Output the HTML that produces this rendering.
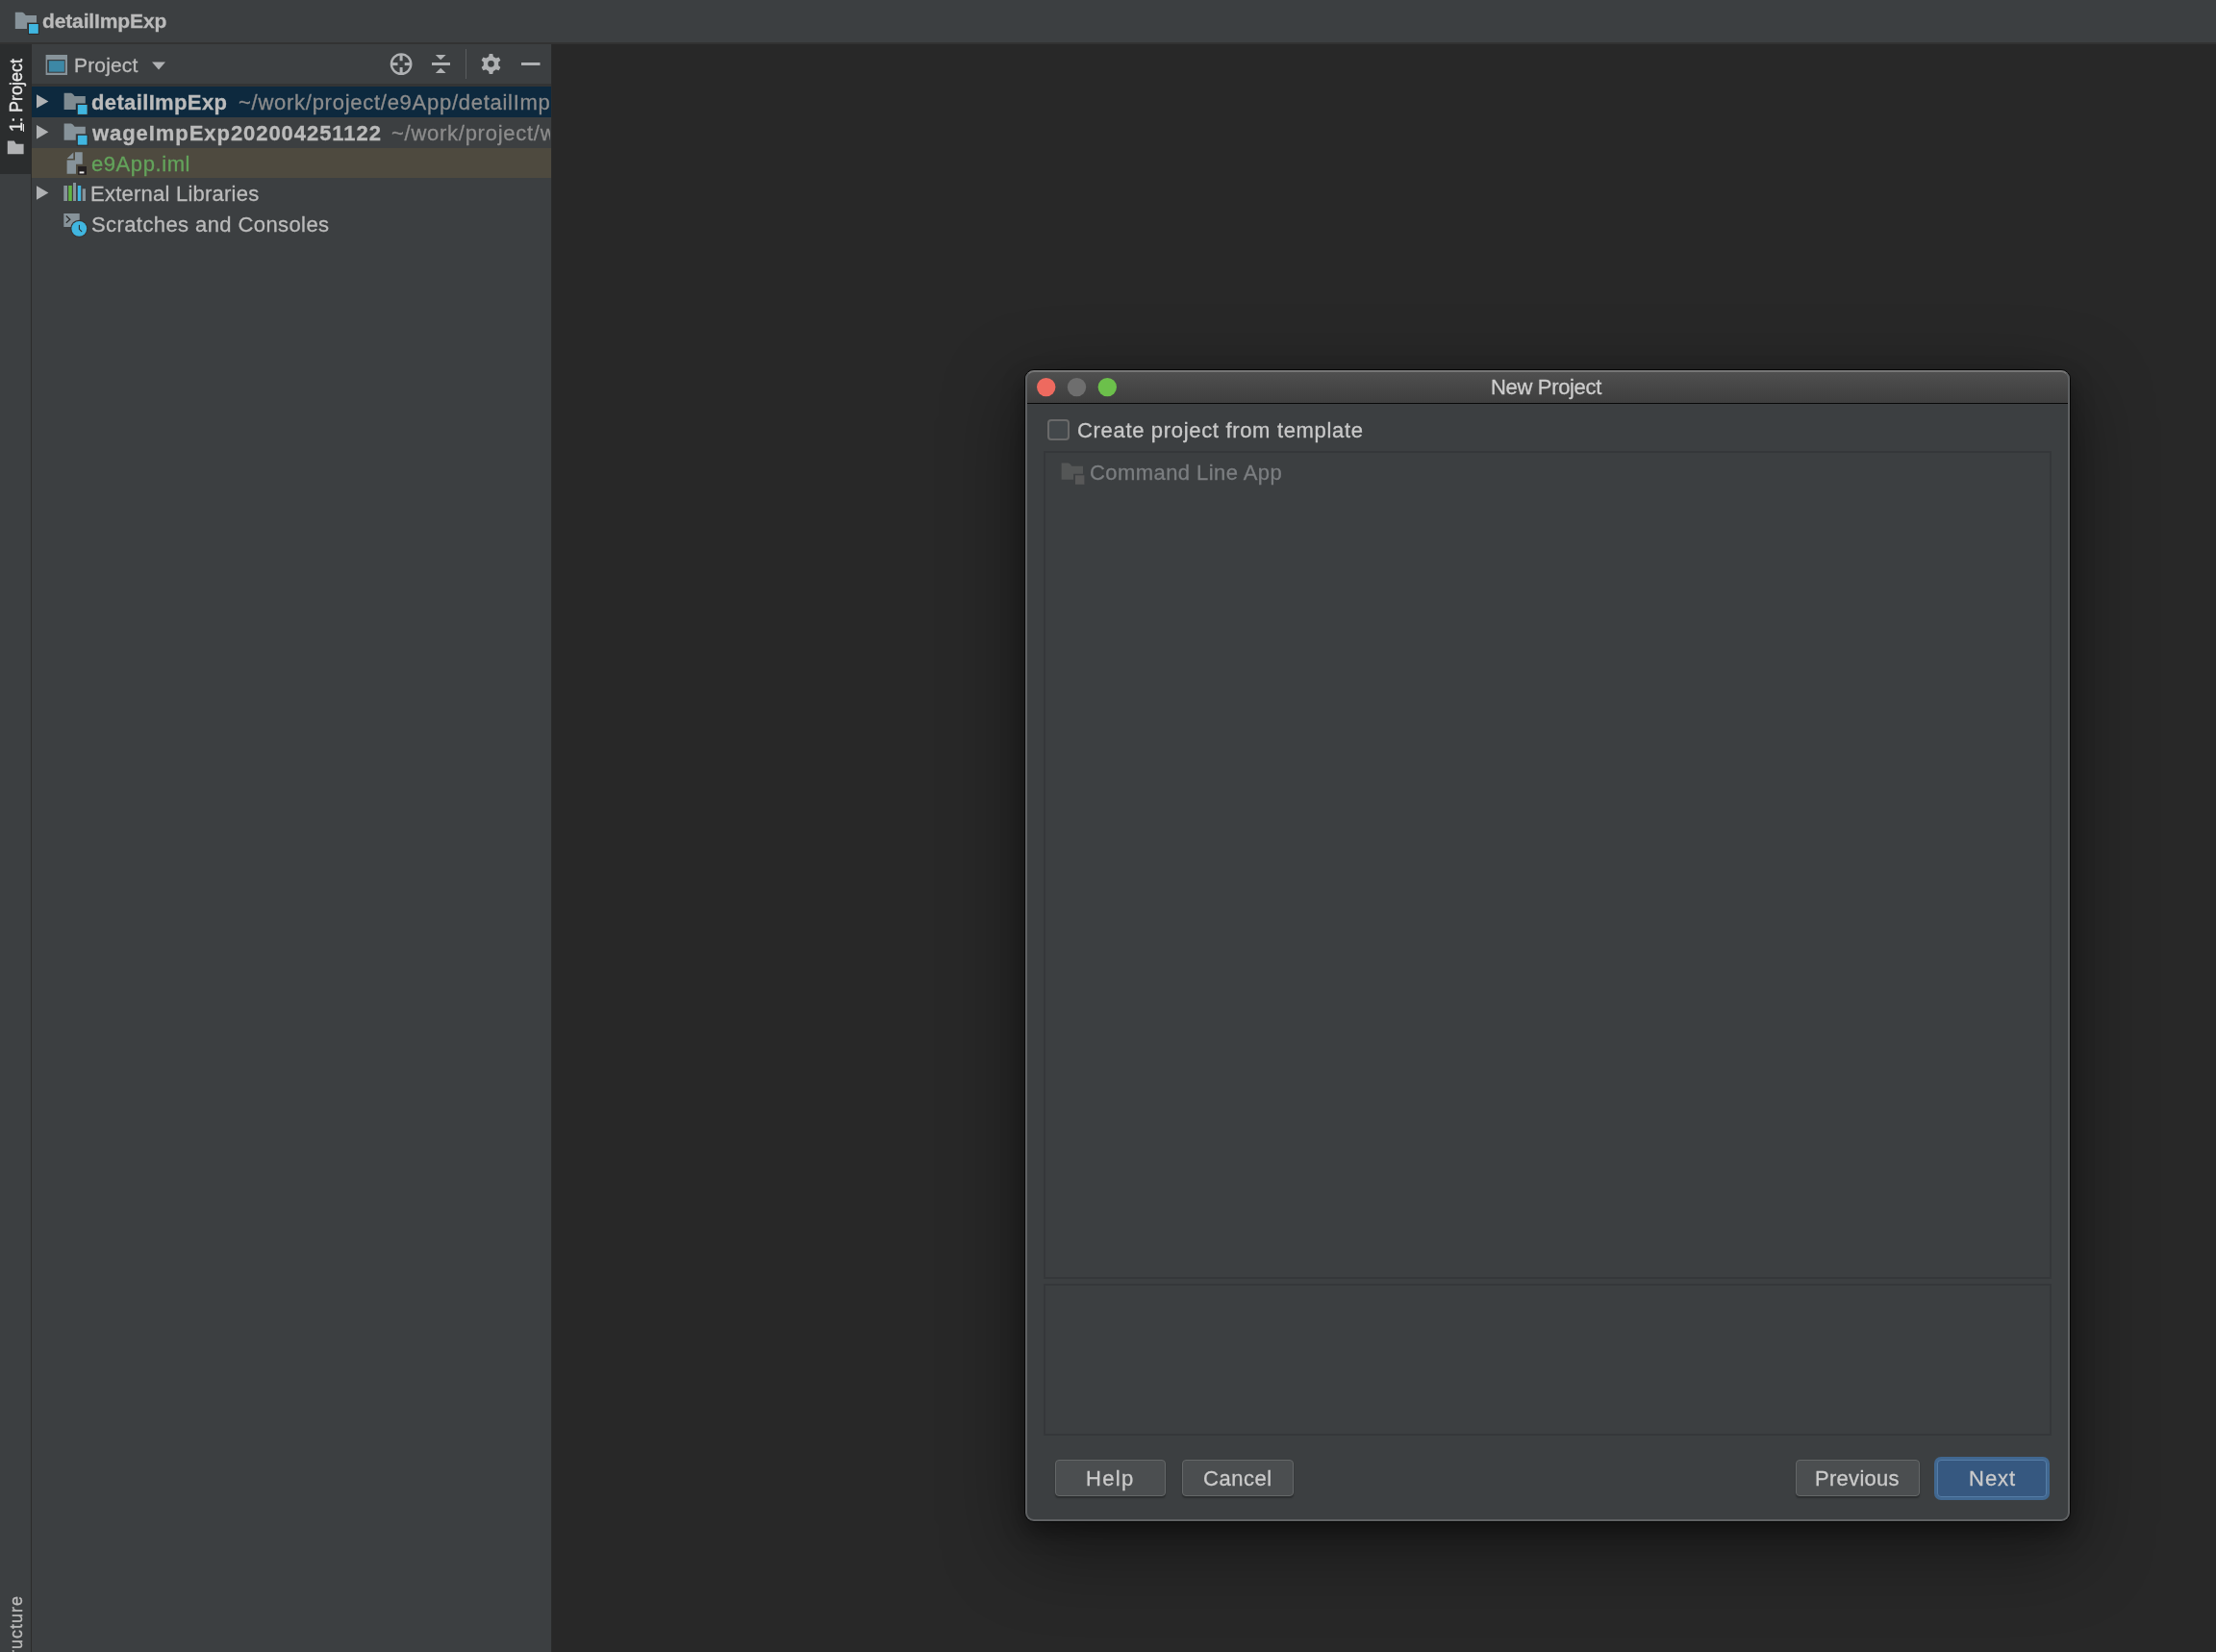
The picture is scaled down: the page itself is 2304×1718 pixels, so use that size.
<!DOCTYPE html>
<html>
<head>
<meta charset="utf-8">
<style>
*{margin:0;padding:0;box-sizing:border-box}
html,body{width:2304px;height:1718px;overflow:hidden;background:#282828;font-family:"Liberation Sans",sans-serif}
.abs{position:absolute}
.t{position:absolute;white-space:pre;line-height:1;will-change:transform;-webkit-text-stroke:0.3px currentColor}
#titlebar{left:0;top:0;width:2304px;height:44px;background:#3c3f41}
#titlesep{left:0;top:44px;width:2304px;height:2px;background:#323232}
#stripe{left:0;top:46px;width:32px;height:1672px;background:#3c3f41}
#stripesel{left:0;top:46px;width:32px;height:135px;background:#2b2d2e}
#stripeline{left:32px;top:46px;width:1px;height:1672px;background:#2b2b2b}
#panel{left:33px;top:46px;width:540px;height:1672px;background:#3c3f41}
#panelsep{left:33px;top:87px;width:540px;height:3px;background:#333435}
#panelright{left:573px;top:46px;width:1px;height:1672px;background:#2b2b2b}
.row{position:absolute;left:33px;width:540px;height:32px}
.tree{font-size:22px;color:#bbbbbb}
.path{color:#8c8c8c}
#dlg{left:1065px;top:384px;width:1088px;height:1199px;border-radius:10px;background:#3c3f41;border:1px solid #070707;overflow:hidden;
  box-shadow:0 10px 22px 0 rgba(0,0,0,0.36),0 26px 80px 6px rgba(0,0,0,0.40)}
#dlgin{left:0;top:0;width:1086px;height:1197px;border-radius:9px;border:2px solid #5f6163;border-top-color:#767676}
#dlgtitle{left:0;top:0;width:1086px;height:34px;background:linear-gradient(#505050,#3e3e3e)}
#dlgtitlesep{left:0;top:34px;width:1086px;height:1px;background:#080808}
.btn{position:absolute;height:38px;border:1px solid #646768;border-radius:4px;background:#4b4e50;box-shadow:0 1.5px 1.5px rgba(0,0,0,0.28)}
.btntxt{font-size:22px;color:#cacaca}
</style>
</head>
<body>
<div class="abs" id="titlebar"></div>
<div class="abs" id="titlesep"></div>
<!-- title icon -->
<svg class="abs" style="left:0;top:0" width="60" height="44" viewBox="0 0 60 44">
  <defs>
    <g id="fold">
      <path d="M0 0 H7.4 Q9.2 0.2 11 3.1 H22.2 V10.7 H12.2 V17.1 H0 Z"/>
      <rect x="13.2" y="11.2" width="11.8" height="11.9" fill="#2d2a2a"/>
      <rect x="14.2" y="12.2" width="9.8" height="9.9" fill="#40b6e0"/>
    </g>
  </defs>
  <use href="#fold" x="15.8" y="12.8" fill="#87939a"/>
</svg>
<div class="t" style="left:43.7px;top:11px;font-size:21px;font-weight:700;letter-spacing:-0.13px;color:#bbbbbb">detailImpExp</div>

<div class="abs" id="stripe"></div>
<div class="abs" id="stripesel"></div>
<div class="abs" id="stripeline"></div>
<div class="t" style="left:-23.5px;top:90px;font-size:18px;color:#e8e8e8;transform:rotate(-90deg);transform-origin:50% 50%;width:80px;height:18px;text-align:center">1: Project</div>
<div class="abs" style="left:24px;top:129px;width:1.3px;height:7.5px;background:#e0e0e0"></div>
<svg class="abs" style="left:0;top:140.8px" width="32" height="24" viewBox="0 0 32 24">
  <path d="M7.8 5.5 H14.8 L16.7 8.8 H24.6 V19.3 H7.8 Z" fill="#b1b2b4"/>
</svg>
<div class="t" style="left:-23.5px;top:1692.3px;font-size:18px;letter-spacing:1px;color:#bbbbbb;transform:rotate(-90deg);transform-origin:50% 50%;width:80px;height:18px;text-align:left">Structure</div>

<div class="abs" id="panel"></div>
<div class="abs" id="panelsep"></div>
<div class="abs" id="panelright"></div>

<!-- panel header -->
<svg class="abs" style="left:46px;top:55px" width="26" height="25" viewBox="0 0 26 25">
  <rect x="1.6" y="2" width="22.4" height="21" fill="#87939a"/>
  <rect x="3.2" y="7.1" width="18.5" height="13.6" fill="#353638"/>
  <rect x="4.8" y="8.2" width="16.1" height="11.5" fill="#3d88a6"/>
</svg>
<div class="t" style="left:76.5px;top:57px;font-size:21px;letter-spacing:0.17px;color:#bbbbbb">Project</div>
<svg class="abs" style="left:156px;top:62px" width="18" height="12" viewBox="0 0 18 12">
  <path d="M2 2.5 H16 L9 10.5 Z" fill="#afb1b3"/>
</svg>
<!-- toolbar icons -->
<svg class="abs" style="left:400px;top:50px" width="180" height="34" viewBox="400 50 180 34">
  <circle cx="417.1" cy="66.6" r="10.2" fill="none" stroke="#afb1b3" stroke-width="2.4"/>
  <rect x="415.6" y="57" width="3" height="6.3" fill="#afb1b3"/>
  <rect x="415.6" y="70" width="3" height="6.3" fill="#afb1b3"/>
  <rect x="407" y="65.1" width="6.5" height="3" fill="#afb1b3"/>
  <rect x="420.7" y="65.1" width="6.5" height="3" fill="#afb1b3"/>
  <rect x="449" y="65" width="19" height="3" fill="#afb1b3"/>
  <path d="M452.8 57 H463.6 L458.2 62.2 Z" fill="#afb1b3"/>
  <path d="M452.8 76 H463.6 L458.2 70.8 Z" fill="#afb1b3"/>
  <rect x="484" y="51" width="1" height="31" fill="#5a5d5f"/>
  <g transform="translate(510.5 66.4)" fill="#afb1b3">
    <path d="M-1.8 -10.5 H1.8 L2.4 -7.5 A7.8 7.8 0 0 1 5.2 -5.8 L8.1 -6.8 L9.9 -3.6 L7.6 -1.6 A7.8 7.8 0 0 1 7.6 1.6 L9.9 3.6 L8.1 6.8 L5.2 5.8 A7.8 7.8 0 0 1 2.4 7.5 L1.8 10.5 H-1.8 L-2.4 7.5 A7.8 7.8 0 0 1 -5.2 5.8 L-8.1 6.8 L-9.9 3.6 L-7.6 1.6 A7.8 7.8 0 0 1 -7.6 -1.6 L-9.9 -3.6 L-8.1 -6.8 L-5.2 -5.8 A7.8 7.8 0 0 1 -2.4 -7.5 Z M0 -3.3 A3.3 3.3 0 1 0 0 3.3 A3.3 3.3 0 1 0 0 -3.3 Z" fill-rule="evenodd"/>
  </g>
  <rect x="542" y="65" width="19.5" height="3" fill="#afb1b3"/>
</svg>

<!-- tree -->
<div class="row" style="top:90px;height:32px;background:#0d293e"></div>
<div class="row" style="top:153.6px;height:31.6px;background:#4e4a3f"></div>
<svg class="abs" style="left:33px;top:90px" width="70" height="160" viewBox="33 90 70 160">
  <!-- arrows -->
  <path d="M38 98.2 L50.4 105.4 L38 112.6 Z" fill="#afb1b3"/>
  <path d="M38 130 L50.4 137.2 L38 144.4 Z" fill="#afb1b3"/>
  <path d="M38 193.3 L50.4 200.5 L38 207.7 Z" fill="#afb1b3"/>
  <!-- folder 1 -->
  <use href="#fold" x="66.6" y="96.8" fill="#7f8b91"/>
  <!-- folder 2 -->
  <use href="#fold" x="66.6" y="128.55" fill="#87939a"/>
  <!-- iml file -->
  <path d="M69.6 165 L76.3 158.6 V165 Z" fill="#87939a"/>
  <path d="M78 158.3 H85.7 V170.8 H79 V180.8 H69.6 V166.4 H78 Z" fill="#87939a"/>
  <rect x="81.1" y="173" width="8.9" height="8.8" fill="#231f20"/>
  <rect x="82.6" y="178.4" width="4.8" height="2" fill="#e8e8e8"/>
  <!-- libraries -->
  <rect x="66.3" y="193" width="3.7" height="16" fill="#87939a"/>
  <rect x="71.2" y="193" width="3.6" height="16" fill="#62b543"/>
  <rect x="76" y="190" width="3" height="19" fill="#87939a"/>
  <rect x="80.8" y="193" width="3.4" height="16" fill="#40b6e0"/>
  <rect x="85.7" y="196.3" width="3.3" height="12.7" fill="#87939a"/>
  <!-- scratches -->
  <rect x="66.3" y="222" width="16.4" height="14" fill="#87939a"/>
  <path d="M68.8 224.5 L72.8 228.2 L68.8 231.8" fill="none" stroke="#2b2b2b" stroke-width="1.2"/>
  <circle cx="82.3" cy="237.8" r="9.1" fill="#363433"/>
  <circle cx="82.3" cy="237.8" r="7.9" fill="#40b6e0"/>
  <path d="M82.4 234.2 V238.3 L84.8 240.6" fill="none" stroke="#2b2b2b" stroke-width="1.1" stroke-linecap="round"/>
</svg>
<div class="t tree" style="left:94.9px;top:96px;font-weight:700;letter-spacing:0.364px">detailImpExp</div>
<div class="t tree path" style="left:247.9px;top:92px;padding-top:4px;height:28px;width:324.1px;overflow:hidden;letter-spacing:0.731px">~/work/project/e9App/detailImpExp</div>
<div class="t tree" style="left:95.8px;top:128px;font-weight:700;letter-spacing:0.943px">wageImpExp202004251122</div>
<div class="t tree path" style="left:407px;top:124px;padding-top:4px;height:28px;width:165px;overflow:hidden;letter-spacing:0.731px">~/work/project/wageImpExp</div>
<div class="t tree" style="left:94.8px;top:160px;letter-spacing:0.574px;color:#63a35b">e9App.iml</div>
<div class="t tree" style="left:93.9px;top:191px;letter-spacing:0.235px">External Libraries</div>
<div class="t tree" style="left:94.9px;top:223px;letter-spacing:0.409px">Scratches and Consoles</div>

<!-- dialog -->
<div class="abs" id="dlg">
  <div class="abs" id="dlgtitle"></div>
  <div class="abs" id="dlgtitlesep"></div>
  <div class="abs" id="dlgin"></div>
</div>
<svg class="abs" style="left:1065px;top:384px" width="120" height="36" viewBox="1065 384 120 36">
  <circle cx="1087.7" cy="402.6" r="9.7" fill="#ee6a5f"/>
  <circle cx="1119.5" cy="402.6" r="9.7" fill="#6e6e6e"/>
  <circle cx="1151.3" cy="402.6" r="9.7" fill="#6cc04b"/>
</svg>
<div class="t" style="left:1549.7px;top:392.1px;font-size:22px;letter-spacing:-0.33px;color:#cdcdcd">New Project</div>
<div class="abs" style="left:1089px;top:436px;width:23px;height:22px;border:2px solid #696969;border-radius:4px;background:#43484b"></div>
<div class="t" style="left:1120.4px;top:437px;font-size:22px;letter-spacing:0.674px;color:#c9c9c9">Create project from template</div>
<div class="abs" style="left:1084.5px;top:469px;width:1048.5px;height:861px;border:2px solid #35373a"></div>
<svg class="abs" style="left:1100px;top:478px" width="32" height="30" viewBox="1100 478 32 30">
  <path d="M1103.6 481.6 H1110.8 Q1112.6 481.8 1114.4 484.8 H1126 V492.7 H1116.1 V498.8 H1103.6 Z" fill="#545656"/>
  <rect x="1118" y="494.3" width="9.4" height="9.5" fill="#585858"/>
</svg>
<div class="t" style="left:1133px;top:481px;font-size:22px;letter-spacing:0.427px;color:#7b7e80">Command Line App</div>
<div class="abs" style="left:1084.5px;top:1334.5px;width:1048.5px;height:158px;border:2px solid #35373a"></div>

<div class="btn" style="left:1097px;top:1518px;width:115px"></div>
<div class="t btntxt" style="left:1129.3px;top:1527px;letter-spacing:1.334px">Help</div>
<div class="btn" style="left:1229px;top:1518px;width:116px"></div>
<div class="t btntxt" style="left:1250.7px;top:1527px;letter-spacing:0.52px">Cancel</div>
<div class="btn" style="left:1867px;top:1518px;width:129px"></div>
<div class="t btntxt" style="left:1887px;top:1527px;letter-spacing:0.285px">Previous</div>
<div class="abs" style="left:2011px;top:1515px;width:120px;height:44.5px;border-radius:7px;background:#416891"></div>
<div class="abs" style="left:2014px;top:1518px;width:114px;height:38.5px;border-radius:4px;border:1px solid #557ca6;background:#365880"></div>
<div class="t btntxt" style="left:2047px;top:1527px;letter-spacing:1.0px">Next</div>
</body>
</html>
